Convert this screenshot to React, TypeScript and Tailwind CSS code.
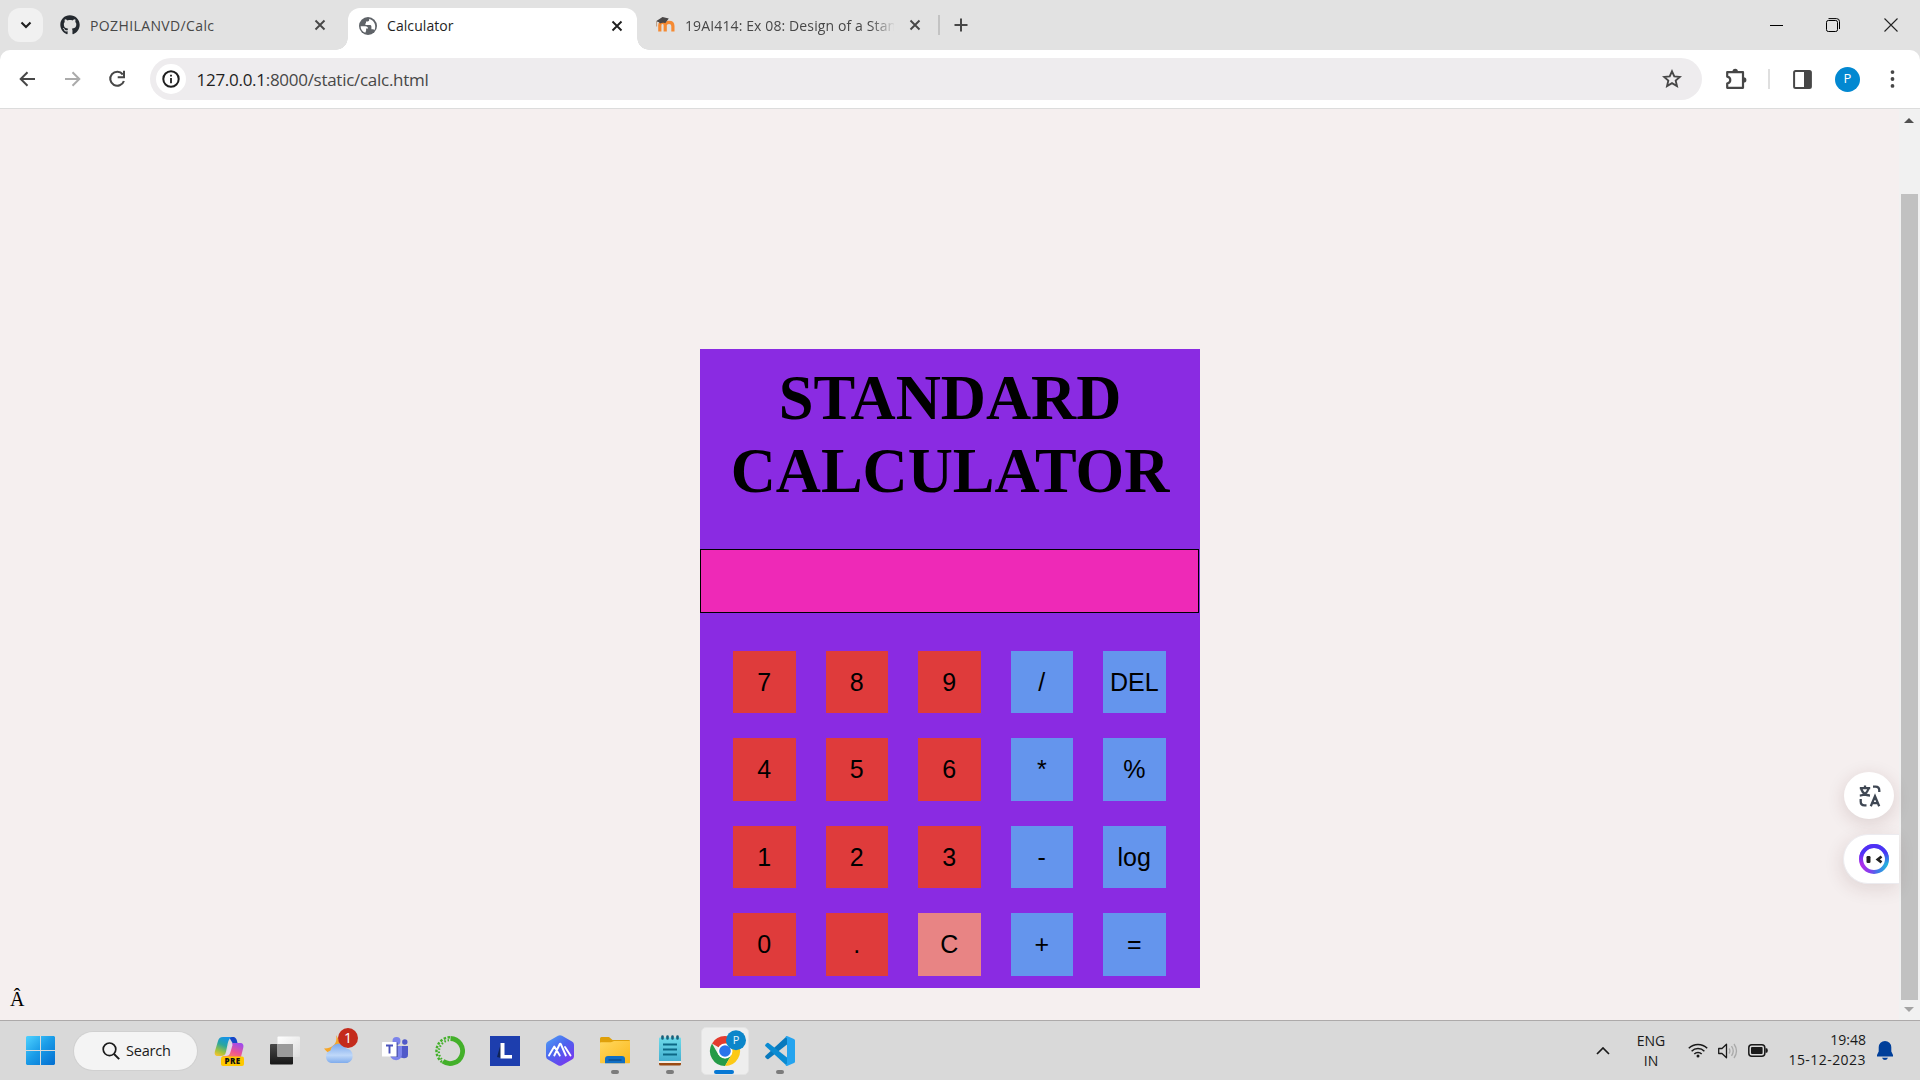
import React from "react";
import { FaGithub } from "react-icons/fa";

const UI = "font-['Open_Sans','Noto_Sans',sans-serif]";

function TabClose({ dark = false }: { dark?: boolean }) {
  return (
    <svg width="12" height="12" viewBox="0 0 12 12" className={dark ? "text-[#1f1f1f]" : "text-[#474747]"}>
      <path d="M1.5 1.5l9 9M10.5 1.5l-9 9" stroke="currentColor" strokeWidth="1.9" />
    </svg>
  );
}

function Globe() {
  return (
    <svg width="20" height="20" viewBox="0 0 20 20">
      <circle cx="10" cy="10" r="9" fill="#5f6368" />
      <path d="M2.6 10.2l4.9 0c1.6 0 2.6 1 2.6 2.4h-2v2.2l-.8 2C4.300 15.700 2.700 13.300 2.600 10.200z" fill="#fff" />
      <path d="M11.200 2.800v1.300c0 .9-.7 1.400-1.500 1.400H8v2h-.9c0 1 .5 1.500 1.500 1.500h3.200c1 0 1.600.7 1.600 1.700v2.600h1.400c.8 0 1.300.3 1.600.9 2-3.600.6-9.500-5.200-11.400z" fill="#fff" />
    </svg>
  );
}

function Moodle() {
  return (
    <svg width="20" height="18" viewBox="0 0 20 18">
      <path d="M4.800 15.500V9.500c0-4 5.400-4 5.400 0v6M10.200 9.500c0-4 7.700-4.400 7.700.6v5.400" fill="none" stroke="#f58a33" strokeWidth="3.200" />
      <path d="M1 5.200L7.500 1l6.300 1.500-3.600 4.800c-1.700-.8-3.600-.6-5.200.2L4 6.200z" fill="#4a4747" />
      <path d="M1.600 5.500v5" stroke="#b99b84" strokeWidth="1" />
    </svg>
  );
}

function TabStrip() {
  return (
    <div className={`flex h-[50px] items-center bg-[#e2e2e2] pl-2 text-[14px] ${UI}`}>
      <div className="flex h-[34px] w-[35px] items-center justify-center rounded-xl bg-[#f1f1f1]">
        <svg width="12" height="8" viewBox="0 0 12 8"><path d="M1.500 1.500L6 6l4.500-4.500" fill="none" stroke="#1f1f1f" strokeWidth="2.1" /></svg>
      </div>
      <div className="flex w-[305px] items-center pl-[17px] text-[#474747]">
        <FaGithub className="size-5 text-[#24292f]" />
        <span className="ml-[10px] w-[224px] whitespace-nowrap tracking-[0.38px]">POZHILANVD/Calc</span>
        <TabClose />
      </div>
      <div className="relative flex h-[42px] w-[289px] items-center self-end rounded-t-xl bg-white pb-[7px] pl-[10px] text-[#1f1f1f]">
        <div className="absolute bottom-0 -left-3 size-3 bg-[radial-gradient(circle_at_0_0,transparent_11.500px,white_12px)]" />
        <div className="absolute bottom-0 -right-3 size-3 bg-[radial-gradient(circle_at_100%_0,transparent_11.500px,white_12px)]" />
        <Globe />
        <span className="ml-[9px] w-[224px] whitespace-nowrap tracking-[0.08px]">Calculator</span>
        <TabClose dark />
      </div>
      <div className="flex w-[301px] items-center pl-[18px] text-[#474747]">
        <Moodle />
        <span className="ml-[10px] mr-[14.500px] w-[209px] overflow-hidden whitespace-nowrap tracking-[0.12px] [mask-image:linear-gradient(to_right,black_185px,transparent_211px)]">
          19AI414: Ex 08: Design of a Standard
        </span>
        <TabClose />
      </div>
      <div className="h-5 w-[2px] bg-[#c3c3c3]" />
      <svg className="ml-[14px]" width="14" height="14" viewBox="0 0 14 14"><path d="M7 .5v13M.5 7h13" stroke="#474747" strokeWidth="2" /></svg>
      <div className="ml-auto flex items-center pr-[22px]">
        <svg width="13" height="13" viewBox="0 0 13 13"><path d="M0 6.500h13" stroke="#000" /></svg>
        <svg className="ml-[43px]" width="14" height="14" viewBox="0 0 14 14" fill="none" stroke="#000">
          <rect x=".5" y="2.500" width="11" height="11" rx="1.800" /><path d="M2.500 .6H10.500a3 3 0 0 1 3 3V11" />
        </svg>
        <svg className="ml-[44px]" width="14" height="14" viewBox="0 0 14 14"><path d="M.5 .5l13 13M13.500 .5l-13 13" stroke="#222" strokeWidth="1.100" /></svg>
      </div>
    </div>
  );
}

function Toolbar() {
  return (
    <div className="bg-[#e2e2e2]">
      <div className="flex h-[58px] items-center rounded-t-[10px] bg-white pl-[19px]">
        <svg width="17" height="16" viewBox="0 0 17 16"><path d="M16 8H2M8.500 1.200L1.700 8l6.800 6.800" fill="none" stroke="#474747" strokeWidth="2" /></svg>
        <svg className="ml-[28px]" width="17" height="16" viewBox="0 0 17 16"><path d="M1 8h14M8.500 1.200L15.300 8l-6.800 6.800" fill="none" stroke="#ababab" strokeWidth="2" /></svg>
        <svg className="ml-[27px]" width="18" height="18" viewBox="0 0 18 18">
          <path d="M14.800 4.500A7 7 0 1 0 15.900 11" fill="none" stroke="#474747" strokeWidth="2.100" /><path d="M16 .8v6.400H9.700" fill="none" stroke="#474747" strokeWidth="2" />
        </svg>
        <div className="ml-[24px] flex h-[42px] w-[1552px] items-center rounded-full bg-[#eeecee] pl-1.5">
          <div className="flex size-[30px] items-center justify-center rounded-full bg-white">
            <svg width="18" height="18" viewBox="0 0 18 18">
              <circle cx="9" cy="9" r="7.700" fill="none" stroke="#1f1f1f" strokeWidth="2" /><path d="M9 8v5.200M9 4.800v1.800" stroke="#1f1f1f" strokeWidth="1.800" />
            </svg>
          </div>
          <span className={`ml-[10.500px] pt-px text-[17px] tracking-[-0.28px] text-[#474747] ${UI}`}>
            <span className="text-[#1f1f1f]">127.0.0.1</span>:8000/static/calc.html
          </span>
          <svg className="mr-5 ml-auto" width="20" height="20" viewBox="0 0 20 20">
            <path d="M10 2.300l2.300 5.100 5.600.5-4.200 3.700 1.250 5.500L10 14.200l-4.950 2.900 1.250-5.500-4.200-3.700 5.600-.5z" fill="none" stroke="#474747" strokeWidth="1.900" />
          </svg>
        </div>
        <svg className="ml-[23px]" width="22" height="22" viewBox="0 0 22 22">
          <path d="M2.200 4.200H18V19.800H2.200V15.500C6.300 14.500 6.300 9.500 2.200 8.600z" fill="none" stroke="#474747" strokeWidth="2.200" strokeLinejoin="round" />
          <path d="M7.500 3.500a2.700 2.700 0 0 1 5.400 0zM18.700 9.200a2.700 2.700 0 0 1 0 5.400z" fill="#474747" />
        </svg>
        <div className="ml-[21px] h-5 w-[2px] bg-[#dfdfdf]" />
        <svg className="ml-[23px]" width="19" height="19" viewBox="0 0 19 19">
          <rect x="1.100" y="1.100" width="16.800" height="16.800" rx="1.500" fill="none" stroke="#474747" strokeWidth="2" /><path d="M11 1h7v17h-7z" fill="#474747" />
        </svg>
        <div className={`ml-[23px] flex size-[25px] items-center justify-center rounded-full bg-[#0288d1] text-[13px] text-white ${UI}`}>P</div>
        <svg className="ml-[30px]" width="5" height="18" viewBox="0 0 5 18" fill="#474747"><circle cx="2.500" cy="2.100" r="1.900" /><circle cx="2.500" cy="9" r="1.900" /><circle cx="2.500" cy="15.900" r="1.900" /></svg>
      </div>
      <div className="h-px bg-[#dcdcdc]" />
    </div>
  );
}

const keys = ["7", "8", "9", "/", "DEL", "4", "5", "6", "*", "%", "1", "2", "3", "-", "log", "0", ".", "C", "+", "="];

function keyColor(k: string) {
  if (k === "C") return "bg-[#e88484]";
  return /^[\d.]$/.test(k) ? "bg-[#df3b3b]" : "bg-[#6495ed]";
}

function Calculator() {
  return (
    <div className="mt-[240px] ml-[700px] h-[639px] w-[500px] bg-[#8a2be2]">
      <h1 className="h-[200px] pt-[13px] text-center font-['Liberation_Serif',serif] text-[62.500px] leading-[73px] font-bold text-black">
        STANDARD
        <br />
        CALCULATOR
      </h1>
      <div className="h-[64px] w-[499px] border border-black bg-[#ee29b7]" />
      <div className="mt-[37.900px] ml-[33px] grid grid-cols-[repeat(5,62.5px)] gap-x-[30px] gap-y-[25px]">
        {keys.map((k) => (
          <button key={k} className={`flex h-[62.5px] items-center justify-center pt-[0.400px] font-['Liberation_Sans',sans-serif] text-[25px] text-black ${keyColor(k)}`}>
            {k}
          </button>
        ))}
      </div>
    </div>
  );
}

function Page() {
  return (
    <div className="relative flex h-[911px] bg-[#f5efef]">
      <div className="flex w-[1899px] flex-col">
        <Calculator />
        <div className="pl-[10px] font-['Liberation_Serif',serif] text-[20px] leading-[22px] text-black">Â</div>
      </div>
      <div className="flex w-[21px] flex-col items-center bg-[#f1f1f1] pt-[9px] pr-[1px]">
        <svg width="10" height="5" viewBox="0 0 10 5"><path d="M5 0l5 5H0z" fill="#505050" /></svg>
        <div className="mt-[71px] h-[806px] w-[17px] bg-[#c1c1c1]" />
        <svg className="mt-[7px]" width="10" height="5" viewBox="0 0 10 5"><path d="M5 5L0 0h10z" fill="#a3a3a3" /></svg>
      </div>
      <div className="absolute top-[663px] left-[1844px] flex h-[47px] w-[50px] items-center justify-center rounded-[50%] bg-white shadow-[0_4px_18px_rgba(80,30,30,0.15)]">
        <svg className="ml-px" width="22" height="22" viewBox="0 0 22 22" fill="none" stroke="#3f4753" strokeWidth="2.300">
          <path d="M.8 3.200h10.400M6 .5v2.700M2.200 4C3.500 7.500 7 10.300 11 10.600M9.400 4C8.200 7.500 5 10.300.8 10.600M14 1.700h2.500c2.500 0 3.800 1.300 3.800 3.800v1.500M1.700 14v2.500c0 2.500 1.300 3.800 3.800 3.800h2M11.800 21.300l4.200-10 4.200 10M13.200 18.200h5.600" />
        </svg>
      </div>
      <div className="absolute top-[725px] left-[1843px] flex h-[50px] w-[56px] items-center rounded-l-full border border-r-0 border-[#ecebef] bg-white pl-[15px] shadow-[-2px_5px_18px_rgba(80,30,30,0.12)]">
        <svg width="30" height="30" viewBox="0 0 30 30">
          <defs>
            <linearGradient id="ring" x1="0" y1="0" x2="1" y2="0"><stop stopColor="#b42be8" /><stop offset=".35" stopColor="#8040ee" /><stop offset=".65" stopColor="#3f78e8" /><stop offset="1" stopColor="#22b5dd" /></linearGradient>
            <linearGradient id="ringTop" x1="0" y1="0" x2="0" y2="1"><stop stopColor="#5030f5" /><stop offset=".25" stopColor="#4a35f5" /><stop offset=".7" stopColor="#4a35f5" stopOpacity="0" /></linearGradient>
          </defs>
          <circle cx="15" cy="15" r="13" fill="none" stroke="url(#ring)" strokeWidth="4" />
          <circle cx="15" cy="15" r="13" fill="none" stroke="url(#ringTop)" strokeWidth="4" />
          <rect x="7.500" y="12" width="4" height="7" rx="1.200" fill="#222" />
          <path d="M22.500 12.500L18.800 15.500l3.700 2.800" fill="none" stroke="#222" strokeWidth="2.700" />
        </svg>
      </div>
    </div>
  );
}

function Slot({ children, mark }: { children: React.ReactNode; mark?: boolean }) {
  return (
    <div className="relative flex h-[59px] w-[55px] items-center justify-center">
      {children}
      {mark && <div className="absolute bottom-[6px] left-[24px] h-[4px] w-[8px] rounded-full bg-[#7c7c7c]" />}
    </div>
  );
}

function WindowsLogo() {
  return (
    <svg width="29" height="29" viewBox="0 0 29 29">
      <defs><linearGradient id="win" gradientUnits="userSpaceOnUse" x1="0" y1="0" x2="26" y2="28"><stop stopColor="#4fd2ff" /><stop offset=".5" stopColor="#1b9de8" /><stop offset="1" stopColor="#0573d3" /></linearGradient></defs>
      <path d="M1 0h13v14H0V1zM15 0h13l1 1v13H15zM0 15h14v14H1l-1-1zM15 15h14v13l-1 1H15z" fill="url(#win)" />
    </svg>
  );
}

function Copilot() {
  return (
    <svg width="31" height="30" viewBox="0 0 31 30">
      <defs>
        <linearGradient id="cpA" x1=".6" y1="0" x2=".2" y2="1"><stop stopColor="#1593e6" /><stop offset=".4" stopColor="#2aa6a0" /><stop offset=".75" stopColor="#9fc23e" /><stop offset="1" stopColor="#f5c32f" /></linearGradient>
        <linearGradient id="cpB" x1=".7" y1="0" x2=".2" y2="1"><stop stopColor="#a24bea" /><stop offset=".5" stopColor="#f0568e" /><stop offset="1" stopColor="#fb9a52" /></linearGradient>
      </defs>
      <path d="M15 1h4c3 0 3.700 2.500 4.500 6h-5z" fill="#1646c8" />
      <path d="M9 1h9c-3 1-3.700 4-4.600 8l-1.500 7c-.8 3-2 4-5 4H4c-3 0-3.800-2-3-5L4 5c.8-2.600 2-4 5-4z" fill="url(#cpA)" />
      <path d="M19 7h7c3 0 4 2 3.200 5l-2 8c-.8 3-2 4-5 4H12c-3 0-3.500-3-3.500-4 4 0 5-1 6-5l1-5c.6-2 1.500-3 3.500-3z" fill="url(#cpB)" />
      <path d="M18 7c-2 0-3 1-3.500 3l-2 7c-.5 2-1.500 3-4 3h3c3 0 4-1 5-4l2-7z" fill="#e6d7ea" />
      <rect x="7" y="20.500" width="23" height="9.500" rx="2" fill="#ffc800" />
      <text x="18.500" y="28.200" fontSize="8" fontWeight="800" textAnchor="middle" letterSpacing=".4" fontFamily="Open Sans" fill="#111">PRE</text>
    </svg>
  );
}

function TaskView() {
  return (
    <svg width="30" height="29" viewBox="0 0 30 29">
      <defs>
        <linearGradient id="tv" x1="0" y1="0" x2="0" y2="1"><stop stopColor="#494949" /><stop offset="1" stopColor="#171717" /></linearGradient>
        <linearGradient id="tw" x1="0" y1="0" x2="1" y2="1"><stop stopColor="#fff" /><stop offset="1" stopColor="#dedede" /></linearGradient>
      </defs>
      <rect y="8" width="23" height="20.500" rx="1" fill="url(#tv)" />
      <rect x="7.500" y=".5" width="22.500" height="20.500" rx="1" fill="url(#tw)" />
      <path d="M7.500 8H23v13H7.500z" fill="#9b9b9b" />
    </svg>
  );
}

function Weather() {
  return (
    <svg width="34" height="36" viewBox="0 0 34 36">
      <defs><linearGradient id="cl" x1="0" y1="0" x2="0" y2="1"><stop stopColor="#7ba8ec" /><stop offset=".6" stopColor="#bfd8f9" /><stop offset="1" stopColor="#80acec" /></linearGradient></defs>
      <path d="M12 7c2 8-3 13.500-12 13.500 3 4.500 7 5 10 3l8-6z" fill="#f5a62a" />
      <path d="M7 35a6.500 6.500 0 0 1-.5-12.500A8.500 8.500 0 0 1 22.500 20.500a7.500 7.500 0 0 1 1 14.500z" fill="url(#cl)" />
      <circle cx="24" cy="10" r="10" fill="#c42b1c" />
      <text x="24" y="15" fontSize="14" textAnchor="middle" fontFamily="Open Sans" fill="#fff">1</text>
    </svg>
  );
}

function Teams() {
  return (
    <svg width="27" height="24" viewBox="0 0 27 24">
      <circle cx="14.500" cy="4" r="4" fill="#7b83eb" /><circle cx="22.800" cy="5" r="2.700" fill="#5059c9" />
      <path d="M18 9h8v8.500c0 4-4 4.500-7 3z" fill="#5059c9" />
      <path d="M8 9h12v8c0 8-11 8-12 1z" fill="#7b83eb" />
      <path d="M1 5.500h15V20H9z" fill="#3f468f" opacity=".6" />
      <rect y="5" width="14.500" height="14.500" rx=".5" fill="#fff" />
      <path d="M4 8.500h7M7.500 8.500v8" stroke="#4b53bc" strokeWidth="1.900" />
    </svg>
  );
}

function Anaconda() {
  return (
    <svg width="30" height="30" viewBox="0 0 30 30" fill="none" stroke="#43b02a">
      <path d="M15.500 2.500A12.500 12.500 0 1 1 8 25.300" strokeWidth="4.800" />
      <path d="M15 1.300A13.700 13.700 0 0 0 7 26" strokeWidth="2.400" strokeDasharray="2.500 1.500" />
      <path d="M14 4.200A11.500 11.500 0 0 0 7.500 24" strokeWidth="2.200" strokeDasharray="1.500 1.800" />
    </svg>
  );
}

function LApp() {
  return (
    <div className="flex size-[30px] items-center justify-center bg-[#1d3eae]">
      <svg width="16" height="18" viewBox="0 0 16 18"><path d="M4 1L0 15l4 1z" fill="#102458" /><path d="M3.500 1h4v12H15v3.500H3.500z" fill="#fff" /></svg>
    </div>
  );
}

function HexApp() {
  return (
    <svg width="28" height="31" viewBox="0 0 28 31">
      <defs><linearGradient id="hx" x1="0" y1="0" x2=".8" y2="1"><stop stopColor="#4fa3f5" /><stop offset=".5" stopColor="#4d63ee" /><stop offset="1" stopColor="#7a35f0" /></linearGradient></defs>
      <path d="M12 .8q2-1 4 0l10 5.700q2 1 2 3.200v11.500q0 2.200-2 3.300l-10 5.700q-2 1-4 0L2 24.500q-2-1.100-2-3.300V9.700Q0 7.500 2 6.500z" fill="url(#hx)" />
      <path d="M3 20.500L8.300 11.500 13.800 20.500M8.300 20.500L13.500 9.500q.7-1.400 1.500 0L19.800 20.500M19 12l5.500 8.500" fill="none" stroke="#fff" strokeWidth="1.900" strokeLinecap="round" strokeLinejoin="round" />
    </svg>
  );
}

function Folder() {
  return (
    <svg width="30" height="27" viewBox="0 0 30 27">
      <defs><linearGradient id="fd" x1="0" y1="0" x2="1" y2="1"><stop stopColor="#ffd75e" /><stop offset="1" stopColor="#fcb91c" /></linearGradient></defs>
      <path d="M0 1.500Q0 0 1.500 0H9l3.500 3H29q1 0 1 1v6H0z" fill="#dfa00a" />
      <path d="M0 6q0-.8.800-.8H11L14 4h16v21.500q0 .7-.7.700H.7q-.7 0-.7-.7z" fill="url(#fd)" />
      <path d="M5 26.200V22q0-3 3-3h14q3 0 3 3v4.200z" fill="#116fc4" /><path d="M8.500 23h13" stroke="#0b4a87" strokeWidth="1.300" />
    </svg>
  );
}

function Notepad() {
  return (
    <svg width="22" height="31" viewBox="0 0 22 31">
      <defs><linearGradient id="np" x1="0" y1="0" x2="0" y2="1"><stop stopColor="#6edbea" /><stop offset="1" stopColor="#43afd0" /></linearGradient></defs>
      <path d="M0 24h22v5q0 1.500-1.500 1.500h-19Q0 30.500 0 29z" fill="#9a4a12" /><path d="M0 24h22v4H0z" fill="#f3ece4" />
      <path d="M0 3.500q0-1 1-1h20q1 0 1 1V26H0z" fill="url(#np)" />
      <path d="M3.500 1.500v2M8.500 1.500v2M13.500 1.500v2M18.500 1.500v2" stroke="#17607a" strokeWidth="2.600" strokeLinecap="round" />
      <path d="M4 9.500h14M4 14.500h14M4 19.500h14" stroke="#0d6886" strokeWidth="1.900" />
    </svg>
  );
}

function Chrome() {
  return (
    <div className="flex size-[48px] items-center justify-center rounded-[5px] border border-[#e4e4e4] bg-[#eee]">
      <svg className="overflow-visible" width="30" height="30" viewBox="0 0 30 30">
        <path d="M15 15L2 7.500a15 15 0 0 1 26 0z" fill="#e33b2e" />
        <path d="M2 7.500A15 15 0 0 0 15 30L21.500 18.700 15 22.500 8.500 18.700z" fill="#259b47" />
        <path d="M15 7.500h13A15 15 0 0 1 15 30l6.500-11.300z" fill="#fcc916" />
        <circle cx="15" cy="15" r="7.500" fill="#fff" /><circle cx="15" cy="15" r="5.800" fill="#2a74ea" />
        <circle cx="26" cy="4.200" r="10" fill="#0b86ca" />
        <text x="26" y="8.200" fontSize="11" textAnchor="middle" fontFamily="Open Sans" fill="#e8f4fb">P</text>
      </svg>
      <div className="absolute bottom-[6px] left-[17px] h-[4px] w-[20px] rounded-full bg-[#0778d4]" />
    </div>
  );
}

function VSCode() {
  return (
    <svg width="30" height="30" viewBox="0 0 30 30">
      <path d="M22 0v8.500L3.500 23q-1 .5-1.800-.2L.5 21.500q-.8-1 0-1.800z" fill="#0879bd" />
      <path d="M22 30v-8.500L3.500 7q-1-.5-1.800.2L.5 8.500q-.8 1 0 1.800z" fill="#0a8bd2" />
      <path d="M22 0l7 3q1 .5 1 1.500v21q0 1-1 1.500l-7 3q-1 0-1.500-1l1.500-1.500V2.500L20.500 1q.5-1 1.500-1z" fill="#25a4ef" />
    </svg>
  );
}

function Taskbar() {
  return (
    <div className={`flex h-[60px] items-center border-t border-[#adaaaa] bg-[#d9d9d9] pl-[26px] text-[#1a1a1a] ${UI}`}>
      <WindowsLogo />
      <div className="ml-[19px] mr-[5px] flex h-[38px] w-[123px] items-center rounded-full bg-[#f4f4f4] pl-[28px] shadow-[0_0_0_1px_rgba(0,0,0,0.04)]">
        <svg width="18" height="18" viewBox="0 0 18 18"><circle cx="7.500" cy="7.300" r="6.300" fill="none" stroke="#1a1a1a" strokeWidth="1.700" /><path d="M12 12l5.200 5.200" stroke="#1a1a1a" strokeWidth="1.900" /></svg>
        <span className="ml-1.5 text-[14.500px] tracking-[-0.2px]">Search</span>
      </div>
      <Slot><Copilot /></Slot>
      <Slot><TaskView /></Slot>
      <Slot><div className="-mt-[9px] ml-[3px]"><Weather /></div></Slot>
      <Slot><div className="-mt-[3px] ml-px"><Teams /></div></Slot>
      <Slot><Anaconda /></Slot>
      <Slot><LApp /></Slot>
      <Slot><HexApp /></Slot>
      <Slot mark><Folder /></Slot>
      <Slot mark><Notepad /></Slot>
      <Slot><Chrome /></Slot>
      <Slot mark><VSCode /></Slot>
      <div className="ml-auto flex items-center pr-[27px] text-[14px] leading-5">
        <svg width="14" height="8" viewBox="0 0 14 8"><path d="M1 7l6-6 6 6" fill="none" stroke="#1a1a1a" strokeWidth="1.700" /></svg>
        <div className="ml-[26px] w-[30px] text-center">ENG<br />IN</div>
        <svg className="ml-[22px]" width="20" height="15" viewBox="0 0 20 15" fill="none" stroke="#1a1a1a" strokeWidth="1.500">
          <path d="M.8 5.300a13 13 0 0 1 18.400 0M3.600 8.200a9 9 0 0 1 12.800 0M6.300 11a5.200 5.200 0 0 1 7.400 0" /><circle cx="10" cy="13" r="1.500" fill="#1a1a1a" stroke="none" />
        </svg>
        <svg className="ml-[10px]" width="20" height="16" viewBox="0 0 20 16" fill="none" strokeWidth="1.300">
          <path d="M.7 5.500h3.300L8.500 1.200v13.600L4 10.500H.7z" stroke="#1a1a1a" strokeLinejoin="round" />
          <path d="M11 5.500q1.800 2.500 0 5M13.500 3.200q3.500 4.800 0 9.600M16 1q5 7 0 14" stroke="#a9a9a9" />
        </svg>
        <svg className="ml-[10px]" width="20" height="13" viewBox="0 0 20 13"><rect x=".8" y=".8" width="16" height="11.400" rx="3" fill="none" stroke="#1a1a1a" strokeWidth="1.500" /><rect x="3" y="3" width="11.600" height="7" rx="1" fill="#1a1a1a" /><path d="M17.500 4.300h1q1.300 0 1.300 2.200t-1.300 2.200h-1z" fill="#1a1a1a" /></svg>
        <div className="-mt-[2px] ml-[18px] w-[80px] text-right whitespace-nowrap">19:48<br /><span className="tracking-[0.45px]">15-12-2023</span></div>
        <svg className="ml-[11px]" width="16" height="19" viewBox="0 0 16 19"><path d="M8 0a6.300 6.300 0 0 1 6.300 6.300v4.200L16 14v1.500H0V14l1.700-3.500V6.300A6.300 6.300 0 0 1 8 0zM5 16.700h6q-1 2.200-3 2.200t-3-2.200z" fill="#003f9a" /></svg>
      </div>
    </div>
  );
}

export default function App() {
  return (
    <div className="h-[1080px] w-[1920px] overflow-hidden">
      <TabStrip />
      <Toolbar />
      <Page />
      <Taskbar />
    </div>
  );
}
